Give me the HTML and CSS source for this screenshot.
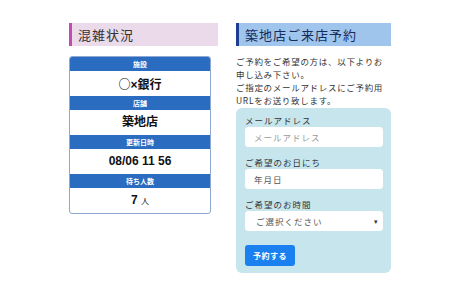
FILE: index.html
```html
<!DOCTYPE html>
<html lang="ja">
<head>
  <meta charset="UTF-8">
  <title>築地店</title>
  <link rel="stylesheet" href="styles.css">
</head>
<body>
  <div class="page">
    <!-- 混雑状況 -->
    <section class="status">
      <h2 class="heading heading-pink">混雑状況</h2>
      <div class="status-card">
        <div class="status-label">施設</div>
        <div class="status-value ja">○<span class="latin">×</span>銀行</div>
        <div class="status-label">店舗</div>
        <div class="status-value">築地店</div>
        <div class="status-label">更新日時</div>
        <div class="status-value">08/06 11 56</div>
        <div class="status-label">待ち人数</div>
        <div class="status-value">7 <span class="unit">人</span></div>
      </div>
    </section>

    <!-- 来店予約 -->
    <section class="reserve">
      <h2 class="heading heading-blue">築地店ご来店予約</h2>
      <p class="intro">ご予約をご希望の方は、以下よりお申し込み下さい。<br>ご指定のメールアドレスにご予約用URLをお送り致します。</p>
      <form class="reserve-form">
        <div class="field">
          <label for="email">メールアドレス</label>
          <input type="email" id="email" placeholder="メールアドレス">
        </div>
        <div class="field">
          <label for="date">ご希望のお日にち</label>
          <input type="text" id="date" class="date" placeholder="年月日">
        </div>
        <div class="field">
          <label for="time">ご希望のお時間</label>
          <div class="select-wrap">
            <select id="time">
              <option>ご選択ください</option>
            </select>
          </div>
        </div>
        <button type="button" class="submit">予約する</button>
      </form>
    </section>
  </div>
</body>
</html>
```

FILE: styles.css
```css
body { margin: 0; background-color: #fff; font-family: "Noto Sans CJK JP", "Noto Sans", sans-serif; color: #222; }
.page { display: flex; gap: 18px; padding: 23px 0 0 69px; }
.status { width: 149px; }
.reserve { width: 155px; }
.heading { margin: 0; height: 23px; line-height: 23px; padding-left: 6px; font-size: 13px; font-weight: normal; letter-spacing: 1px; }
.heading-pink { background-color: #ebdaea; border-left: 3px solid #c24bb0; color: #333; }
.heading-blue { background-color: #9fc5ec; border-left: 3px solid #1d3f8f; color: #172c5c; }
.status-card { width: 140px; margin-top: 10px; border: 1px solid #8ea9d3; border-radius: 3px; overflow: hidden; }
.status-label { height: 14px; line-height: 14px; background-color: #2a6cbf; color: #fff; font-size: 7px; font-weight: bold; text-align: center; }
.status-value { height: 25px; line-height: 25px; font-family: "Liberation Sans", "Noto Sans CJK JP", sans-serif; font-size: 12px; font-weight: bold; text-align: center; color: #111; }
.status-value.ja { font-family: "Noto Sans CJK JP", sans-serif; }
.status-value .latin { font-family: "Liberation Sans", sans-serif; }
.status-value .unit { font-size: 8px; font-weight: normal; }
.intro { margin: 9px 0 0; font-size: 8.5px; line-height: 13px; letter-spacing: 0.7px; color: #333; }
.reserve-form { margin-top: 1px; padding: 6px 8px 7px 9px; background-color: #c7e5ed; border-radius: 6px; }
.field { margin-bottom: 9px; }
.field label { display: block; height: 13px; line-height: 13px; font-size: 8.5px; letter-spacing: 1px; color: #333; }
.field input, .field select { display: block; box-sizing: border-box; width: 100%; height: 20px; padding: 0 8px; border: 1px solid #fff; border-radius: 3px; background-color: #fff; font-family: inherit; font-size: 8.5px; letter-spacing: 1px; color: #555; }
.field input::placeholder { color: #999; }
.field input.date::placeholder { color: #555; }
.select-wrap { position: relative; }
.field select { appearance: none; -webkit-appearance: none; padding-left: 10px; color: #555; }
.select-wrap::after { content: "\25BE"; position: absolute; right: 5px; top: 5px; font-size: 7px; color: #333; }
.submit { margin-top: 5px; width: 50px; height: 21px; padding: 0; background-color: #1a7fef; color: #fff; border: none; border-radius: 3px; font-family: inherit; font-size: 8px; font-weight: bold; letter-spacing: 0.5px; cursor: pointer; }
```
